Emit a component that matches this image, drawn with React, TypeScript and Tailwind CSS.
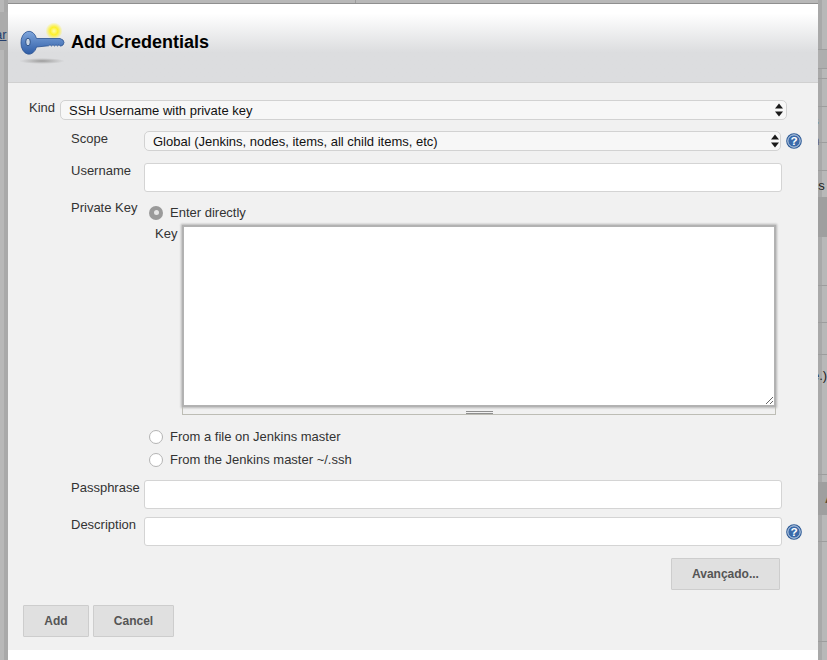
import type { ReactNode } from "react";

const stripLines = [49, 68, 78, 106, 142, 170, 354, 474, 541, 641, 285, 322];

function HelpIcon() {
  return (
    <svg width="16" height="16" viewBox="0 0 17 17" className="shrink-0">
      <circle cx="8.5" cy="8.5" r="8.3" fill="#2a5996" />
      <circle cx="8.5" cy="8.5" r="6.6" fill="#3a6aaa" stroke="#e8eef6" strokeWidth="0.9" />
      <text x="8.5" y="13" textAnchor="middle" fontSize="12.5" fontWeight="700" fill="#ffffff" fontFamily="'Liberation Sans', sans-serif">
        ?
      </text>
    </svg>
  );
}

function KeyIcon() {
  return (
    <svg width="50" height="52" viewBox="0 0 50 52" className="shrink-0">
      <defs>
        <radialGradient id="glow">
          <stop offset="0%" stopColor="#fffbb0" />
          <stop offset="45%" stopColor="#fdf02a" />
          <stop offset="100%" stopColor="#fdf02a" stopOpacity="0" />
        </radialGradient>
        <radialGradient id="shade">
          <stop offset="0%" stopColor="#9a9a9a" />
          <stop offset="100%" stopColor="#a4a4a4" stopOpacity="0" />
        </radialGradient>
        <linearGradient id="blade" x1="0" y1="0" x2="0" y2="1">
          <stop offset="0%" stopColor="#7fa6dc" />
          <stop offset="100%" stopColor="#2f5da6" />
        </linearGradient>
      </defs>
      <ellipse cx="23" cy="41" rx="23" ry="3" fill="url(#shade)" />
      <circle cx="35" cy="11" r="8.5" fill="url(#glow)" />
      <path
        d="M2 23a8 11 0 0 1 15.5-4.5H41l3 1.5 1 2.5-1 2.5-2.5 1.2-1.5-1.5-1.5 1.3-1.5-1.3-1.5 1.3-1.5-1.3-1.5 1.3-1.5-1.3-1.5 1.1L17.5 27a8 11 0 0 1-15.5-4z"
        fill="url(#blade)"
        stroke="#2a5290"
        strokeWidth="0.8"
      />
      <ellipse cx="9" cy="22" rx="2.3" ry="3.8" fill="#c9d6e6" stroke="#1f4680" strokeWidth="0.9" />
    </svg>
  );
}

function SelectField({ value, help }: { value: string; help?: boolean }) {
  return (
    <div className="relative h-[20px] flex-1">
      <select
        defaultValue={value}
        className="block h-full w-full appearance-none rounded-[5px] border border-[#d2d2d2] bg-[#f7f7f7] pl-[8px] text-[13px] text-[#111]"
      >
        <option>{value}</option>
      </select>
      <svg width="8" height="14" viewBox="0 0 8 14" className={help ? "absolute right-[2px] top-[3px]" : "absolute right-[4px] top-[3px]"}>
        <path d="M4 0.5 8 5.5H0zM4 13.5 0 8.5h8z" fill="#1a1a1a" />
      </svg>
    </div>
  );
}

function TextField() {
  return <input type="text" className="h-[29px] w-[638px] rounded-[3px] border border-[#d4d4d4] bg-white" />;
}

function FieldLabel({ children, className }: { children: ReactNode; className: string }) {
  return <label className={`text-[13px] leading-[15px] text-[#333] ${className}`}>{children}</label>;
}

function Radio({ label, checked }: { label: string; checked?: boolean }) {
  return (
    <div className="flex h-[15px] items-center">
      {checked ? (
        <span className="flex h-[14px] w-[14px] items-center justify-center rounded-full bg-[#9a9a9a]">
          <span className="h-[5px] w-[5px] rounded-full bg-[#e6e6e6]" />
        </span>
      ) : (
        <span className="h-[14px] w-[14px] rounded-full border border-[#b4b4b4] bg-white" />
      )}
      <span className="ml-[7px] text-[13px] text-[#333]">{label}</span>
    </div>
  );
}

function GrayButton({ children, className }: { children: ReactNode; className: string }) {
  return (
    <button className={`rounded-[1px] border border-[#cdcdcd] bg-[#e0e0e0] text-[12px] font-bold text-[#555] ${className}`}>
      {children}
    </button>
  );
}

export default function App() {
  return (
    <div className="relative h-[660px] w-[827px] overflow-hidden bg-[#b8b8b8] pl-[8px] pt-[4px] font-['Liberation_Sans',Arial,sans-serif]">
      {/* page behind the modal */}
      <div className="absolute left-[4px] top-0 h-[660px] w-[4px] bg-[#a9a9a9]" />
      <div className="absolute left-0 top-[12px] h-[38px] w-[8px] bg-[#ababab]" />
      <span className="absolute left-[-5px] top-[25px] text-[13px] text-[#24406e] underline">ar</span>
      <div className="absolute left-[355px] top-0 h-[4px] w-px bg-[#9c9c9c]" />
      <div className="absolute left-[818px] top-0 h-[660px] w-[4px] bg-[#a9a9a9]" />
      <div className="absolute left-[818px] top-[49px] h-[19px] w-[9px] bg-[#aeaeae]" />
      {stripLines.map((y) => (
        <div key={y} className="absolute left-[818px] h-px w-[9px] bg-[#9d9d9d]" style={{ top: y }} />
      ))}
      <div className="absolute left-[818px] top-[197px] h-[40px] w-[9px] bg-[#9f9f9f]" />
      <div className="absolute left-[818px] top-[482px] h-[33px] w-[9px] bg-[#9f9f9f]" />
      <span className="absolute left-[812px] top-[111px] text-[13px] text-[#222]">
        s <span className="text-[#5a2a20]">n</span>
      </span>
      <span className="absolute left-[811px] top-[176px] text-[13px] text-[#222]">os</span>
      <span className="absolute left-[812px] top-[366px] text-[13px] text-[#222]">e.)</span>
      <span className="absolute left-[825px] top-[489px] text-[13px] font-bold text-[#5a4a30]">A</span>

      {/* modal */}
      <div className="relative h-[656px] w-[810px] bg-white">
        <div className="absolute left-0 top-[-1px] h-px w-full bg-[#8f8f8f]" />
        <header className="flex h-[79px] items-start border-b border-[#d0d0d0] bg-gradient-to-b from-white from-[12%] to-[#dcdddf] to-[62%] pl-[11px] pt-[16px]">
          <KeyIcon />
          <h1 className="ml-[2px] mt-[12px] text-[18px] font-bold leading-[21px] text-black">Add Credentials</h1>
        </header>

        <form className="h-[567px] bg-[#f1f1f1] pl-[21px] pt-[17px]">
          <div className="flex w-[758px] items-start">
            <FieldLabel className="w-[31px]">Kind</FieldLabel>
            <SelectField value="SSH Username with private key" />
          </div>

          <div className="ml-[42px] mt-[11px] flex items-start">
            <FieldLabel className="w-[73px]">Scope</FieldLabel>
            <div className="flex w-[658px] items-center gap-[5px]">
              <SelectField value="Global (Jenkins, nodes, items, all child items, etc)" help />
              <HelpIcon />
            </div>
          </div>

          <div className="ml-[42px] mt-[12px] flex items-start">
            <FieldLabel className="w-[73px]">Username</FieldLabel>
            <TextField />
          </div>

          <div className="ml-[42px] mt-[12px] flex items-start">
            <FieldLabel className="mt-[-4px] w-[78px]">Private Key</FieldLabel>
            <div className="pt-[1px]">
              <Radio label="Enter directly" checked />
              <div className="ml-[6px] mt-[5px] flex items-start">
                <FieldLabel className="w-[27px] pt-[1px]">Key</FieldLabel>
                <div className="w-[594px]">
                  <textarea className="block h-[182px] w-full border-2 border-[#b2b2b2] bg-white shadow-[0_0_2px_1px_#b8b8b8]" />
                  <div className="flex h-[8px] justify-center border-x border-b border-[#bdbdb5]">
                    <div className="mt-[4px] h-[3px] w-[27px] border-y border-[#8f8f8f]" />
                  </div>
                </div>
              </div>
              <div className="mt-[14px] flex flex-col gap-[8px]">
                <Radio label="From a file on Jenkins master" />
                <Radio label="From the Jenkins master ~/.ssh" />
              </div>
            </div>
          </div>

          <div className="ml-[42px] mt-[13px] flex items-start">
            <FieldLabel className="w-[73px]">Passphrase</FieldLabel>
            <TextField />
          </div>

          <div className="ml-[42px] mt-[8px] flex items-start">
            <FieldLabel className="w-[73px]">Description</FieldLabel>
            <div className="flex items-center gap-[4px]">
              <TextField />
              <HelpIcon />
            </div>
          </div>

          <div className="mt-[12px] flex w-[751px] justify-end">
            <GrayButton className="h-[32px] w-[109px]">Avançado...</GrayButton>
          </div>

          <div className="ml-[-6px] mt-[15px] flex gap-[4px]">
            <GrayButton className="h-[32px] w-[66px]">Add</GrayButton>
            <GrayButton className="h-[32px] w-[81px]">Cancel</GrayButton>
          </div>
        </form>
      </div>
    </div>
  );
}
